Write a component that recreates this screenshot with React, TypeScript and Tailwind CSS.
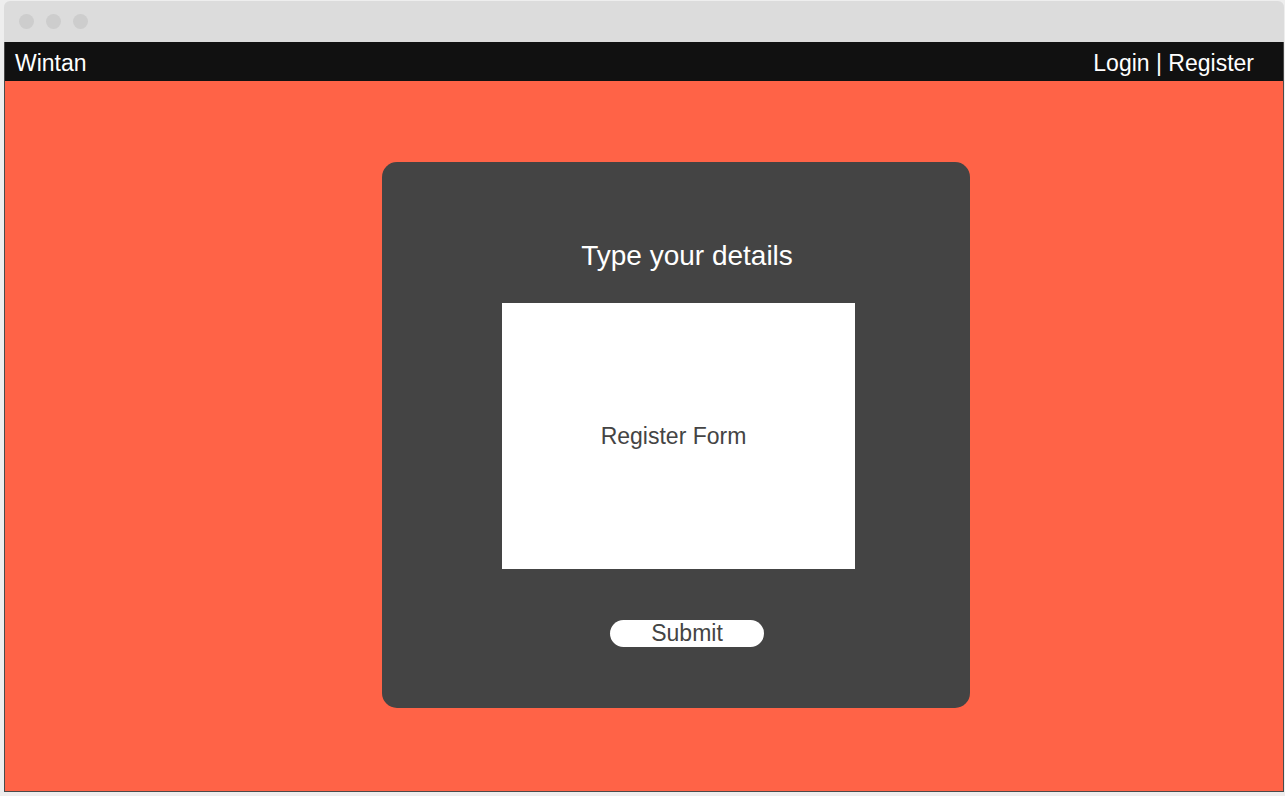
export default function App() {
  return (
    <div className="w-[1285px] h-[796px] bg-[#eeeeee] pt-[1px] pl-[4px]" style={{ fontFamily: '"Liberation Sans", Arial, sans-serif' }}>
      <div className="w-[1280px] h-[791px] flex flex-col rounded-t-[6px] overflow-hidden">
        {/* window chrome */}
        <div className="h-[41px] bg-[#dcdcdc] flex items-center gap-[12px] pl-[15px] shrink-0">
          <span className="w-[15px] h-[15px] rounded-full bg-[#cdcdcd]" />
          <span className="w-[15px] h-[15px] rounded-full bg-[#cdcdcd]" />
          <span className="w-[15px] h-[15px] rounded-full bg-[#cdcdcd]" />
        </div>

        <div className="flex-1 flex flex-col border-x border-b border-[#4a4a4a]">
          <nav className="h-[39px] bg-[#111111] flex items-center justify-between pt-[4px] pl-[10px] pr-[29px] text-white text-[23px] leading-none shrink-0">
            <span>Wintan</span>
            <span>Login | Register</span>
          </nav>

          <main className="flex-1 bg-[#ff6347] pt-[81px]">
            <div className="ml-[377px] w-[588px] h-[546px] rounded-[15px] bg-[#444444] pt-[80px] flex flex-col">
              <h1 className="pl-[22px] text-center text-white text-[28px] leading-none">Type your details</h1>
              <div className="ml-[120px] mt-[33px] w-[353px] h-[266px] bg-white flex items-center justify-center pr-[10px] text-[#444444] text-[23px]">
                Register Form
              </div>
              <div className="pl-[22px] mt-[51px] flex justify-center">
                <button className="w-[154px] h-[27px] rounded-full bg-white text-[#444444] text-[23px] leading-none flex items-center justify-center">
                  Submit
                </button>
              </div>
            </div>
          </main>
        </div>
      </div>
    </div>
  );
}
